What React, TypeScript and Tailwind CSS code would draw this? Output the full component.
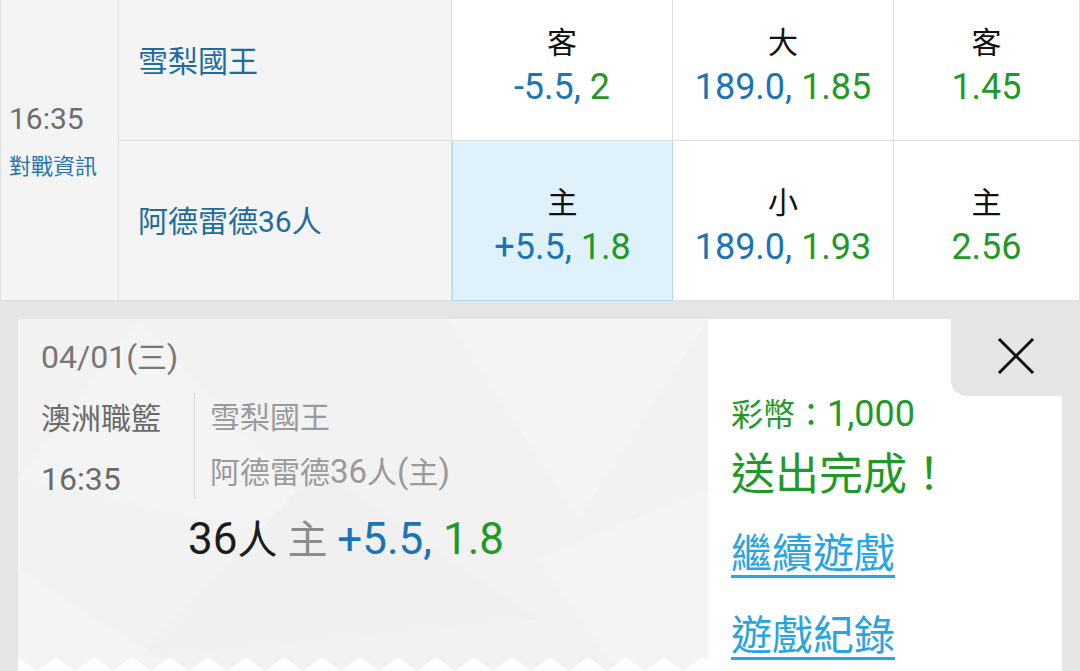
import React from 'react';

const font = { fontFamily: 'Roboto, "Noto Sans CJK TC", sans-serif' };

type Odd = { label: string; main?: string; odd: string; picked?: boolean };

const rows: { team: string; odds: Odd[] }[] = [
  {
    team: '雪梨國王',
    odds: [
      { label: '客', main: '-5.5,', odd: '2' },
      { label: '大', main: '189.0,', odd: '1.85' },
      { label: '客', odd: '1.45' },
    ],
  },
  {
    team: '阿德雷德36人',
    odds: [
      { label: '主', main: '+5.5,', odd: '1.8', picked: true },
      { label: '小', main: '189.0,', odd: '1.93' },
      { label: '主', odd: '2.56' },
    ],
  },
];

function OddCell({ o }: { o: Odd }) {
  return (
    <div
      className={`flex flex-col items-center justify-center pt-[8px] border-b border-r ${
        o.picked ? 'bg-[#dff2fb] border-[#b7d6e8] border-l' : 'bg-white border-[#dedede]'
      }`}
    >
      <div className="text-[30px] leading-[44px] text-[#111]">{o.label}</div>
      <div className="text-[36px] leading-[44px] whitespace-nowrap">
        {o.main && <span className="text-[#1b74b4]">{o.main} </span>}
        <span className="text-[#1f9a26]">{o.odd}</span>
      </div>
    </div>
  );
}

export default function App() {
  return (
    <div className="h-[671px] w-[1080px] overflow-hidden bg-[#e5e5e5]" style={font}>
      {/* Odds table (scrolled a bit) */}
      <div className="mt-[-19px] grid grid-cols-[119px_333px_221px_221px_1fr] grid-rows-[160px_160px]">
        <div className="row-span-2 flex flex-col justify-center pl-[8px] bg-[#f4f4f4] border-l border-r border-b border-[#dedede]">
          <div className="text-[30px] leading-[44px] text-[#6d6d6d]">16:35</div>
          <div className="mt-[8px] text-[22px] leading-[36px] text-[#2876ad]">對戰資訊</div>
        </div>
        {rows.map((r) => (
          <React.Fragment key={r.team}>
            <div className="flex items-center pl-[19px] pt-[2px] bg-[#f4f4f4] border-r border-b border-[#dedede] text-[30px] text-[#1f6c9c]">
              {r.team}
            </div>
            {r.odds.map((o, i) => (
              <OddCell key={i} o={o} />
            ))}
          </React.Fragment>
        ))}
      </div>

      {/* Bet ticket */}
      <div className="mt-[18px] ml-[18px] mr-[18px] flex h-[352px]">
        <div className="relative w-[690px] bg-[#f2f2f2] pl-[23px] pt-[20px] overflow-hidden">
          <svg className="absolute inset-0" width="690" height="352" viewBox="0 0 690 352">
            <polygon points="120,0 330,230 0,160" fill="#f4f4f4" />
            <polygon points="430,0 690,0 560,200" fill="#f4f4f4" />
            <polygon points="300,150 520,300 120,340" fill="#f0f0f0" />
            <polygon points="520,240 690,170 690,352 600,352" fill="#f4f4f4" />
            <polygon points="0,250 160,352 0,352" fill="#f4f4f4" />
          </svg>
          <div className="relative">
            <div className="text-[32px] leading-[36px] text-[#777]">
              04/01(<span className="text-[30px]">三</span>)
            </div>
            <div className="mt-[13px] flex">
              <div className="w-[153px] text-[30px] text-[#6b6b6b]">
                <div className="h-[60px] leading-[60px]">澳洲職籃</div>
                <div className="h-[60px] leading-[60px] text-[32px]">16:35</div>
              </div>
              <div className="mt-[4px] h-[106px] border-l border-[#d8d8d8] pl-[15px] text-[30px] text-[#9a9a9a]">
                <div className="mt-[-2px] h-[54px] leading-[54px]">雪梨國王</div>
                <div className="h-[54px] leading-[54px] whitespace-nowrap">
                  阿德雷德<span className="text-[33px]">36</span>人<span className="text-[33px]">(</span>主
                  <span className="text-[33px]">)</span>
                </div>
              </div>
            </div>
            <div className="mt-[7px] ml-[147px] text-[40px] leading-[46px] whitespace-nowrap">
              <span className="text-[#1c1c1c]">
                <span className="text-[44px]">36</span>人{' '}
              </span>
              <span className="text-[#8c8c8c]">主 </span>
              <span className="text-[44px] text-[#1b74b4]">+5.5, </span>
              <span className="text-[44px] text-[#1f9a26]">1.8</span>
            </div>
          </div>
          <svg className="absolute bottom-0 left-0" width="690" height="14">
            <defs>
              <pattern id="zig" width="38" height="14" patternUnits="userSpaceOnUse">
                <polygon points="0,0 19,14 38,0 38,14 0,14" fill="#ffffff" />
              </pattern>
            </defs>
            <rect width="690" height="14" fill="url(#zig)" />
          </svg>
        </div>

        <div className="relative flex-1 bg-white pl-[23px] pt-[77px]">
          <div className="absolute top-0 right-[-18px] flex h-[77px] w-[129px] items-center justify-center rounded-bl-[16px] bg-[#e5e5e5]">
            <svg width="38" height="38" viewBox="0 0 38 38" className="mt-[-4px]">
              <path d="M2 2 L36 36 M36 2 L2 36" stroke="#111" strokeWidth="3" />
            </svg>
          </div>
          <div className="mt-[-2px] text-[32px] leading-[40px] text-[#1f9a26] whitespace-nowrap">
            彩幣：<span className="text-[36px]">1,000</span>
          </div>
          <div className="mt-[12px] text-[44px] leading-[56px] text-[#1f9a26] whitespace-nowrap">送出完成！</div>
          <div className="mt-[24px] text-[41px] leading-[54px] text-[#29a4e2] underline decoration-[3px] underline-offset-[7px]">
            繼續遊戲
          </div>
          <div className="mt-[28px] text-[41px] leading-[54px] text-[#29a4e2] underline decoration-[3px] underline-offset-[7px]">
            遊戲紀錄
          </div>
        </div>
      </div>
    </div>
  );
}
